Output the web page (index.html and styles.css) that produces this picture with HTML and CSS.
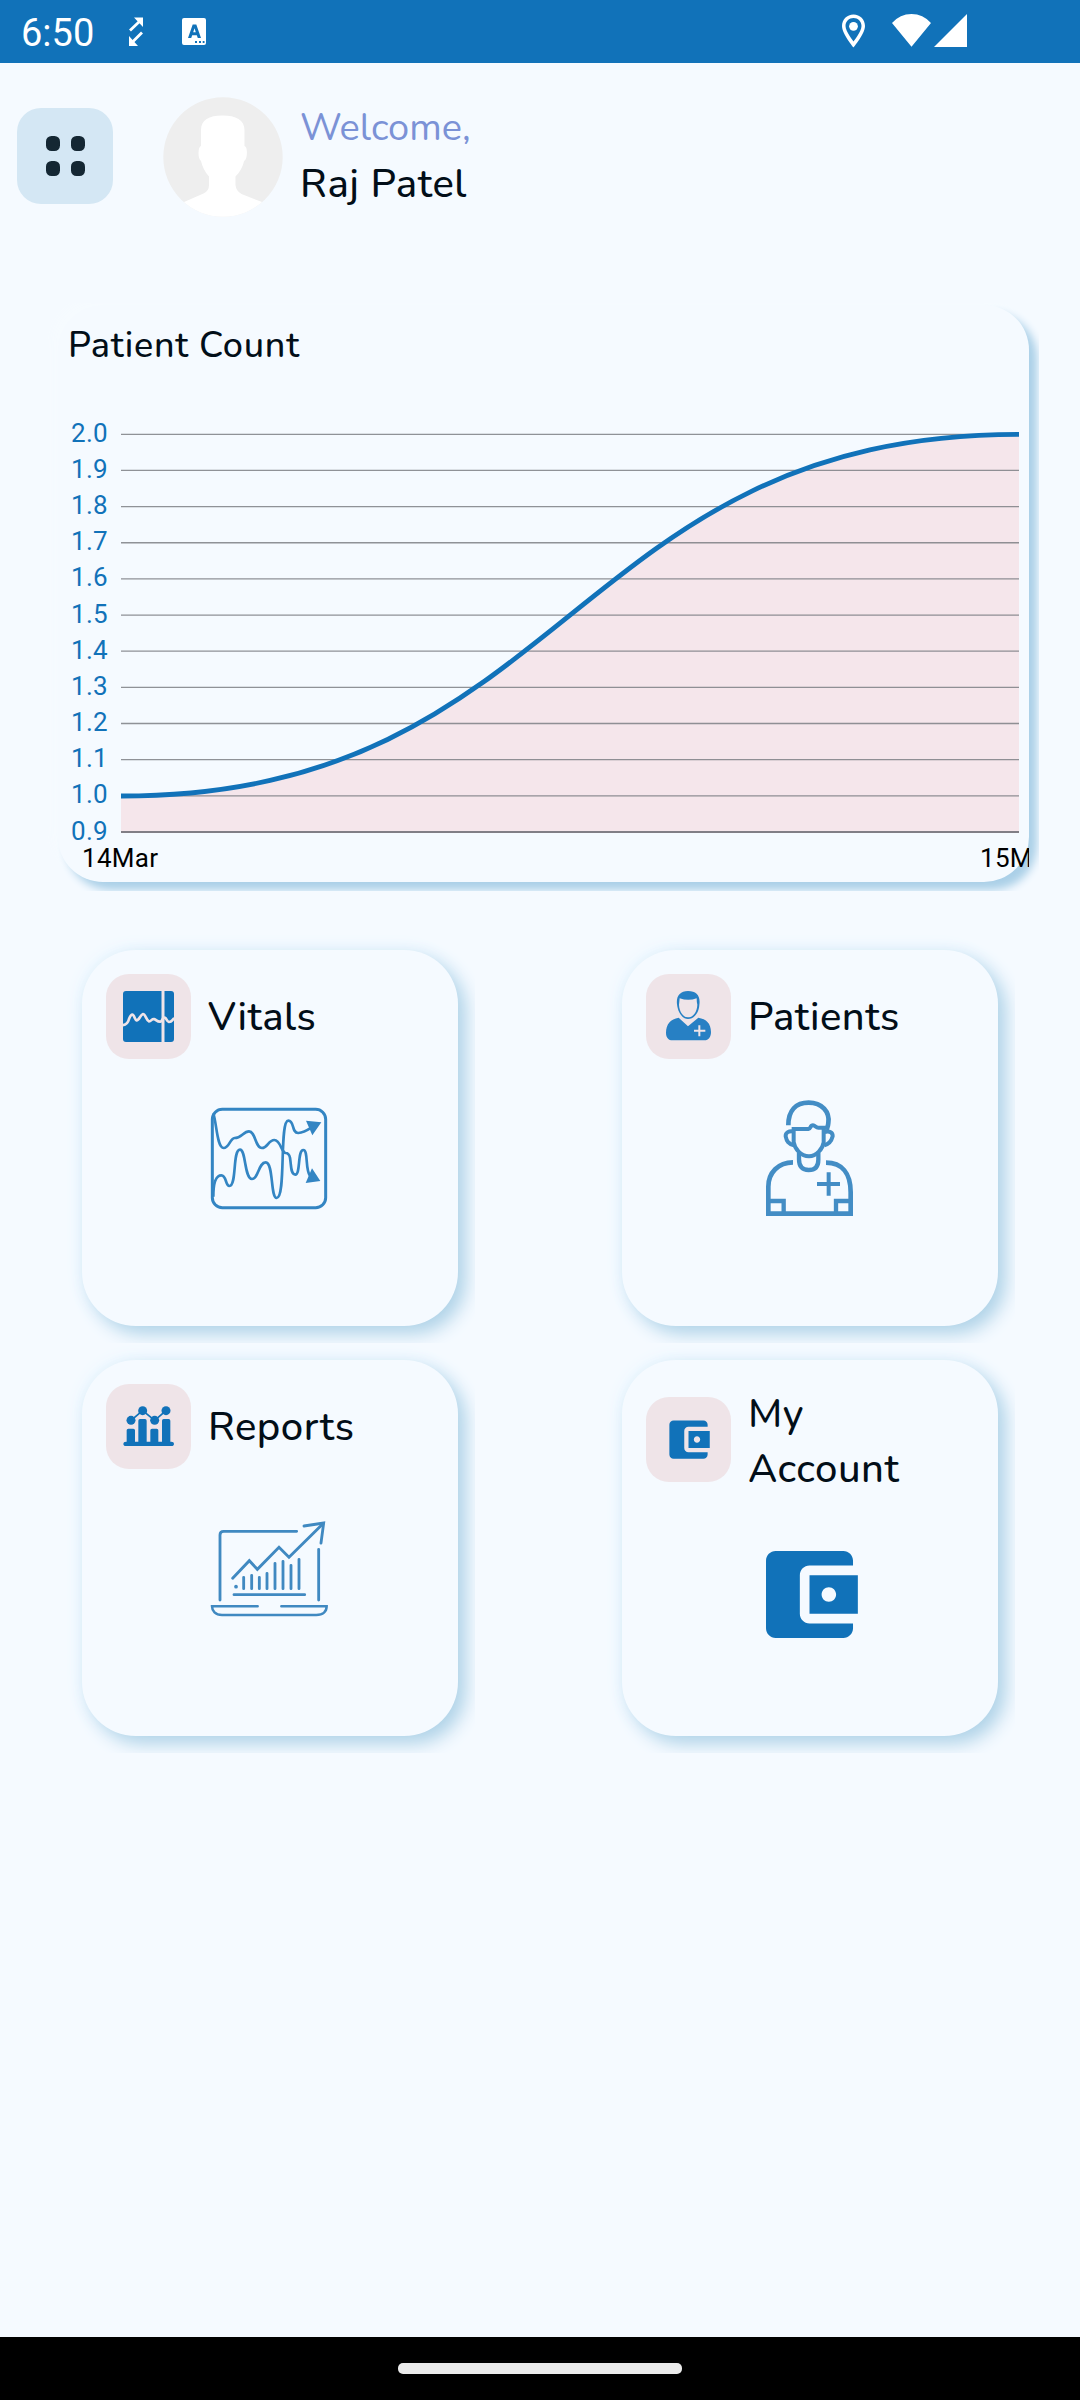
FILE: index.html
```html
<!DOCTYPE html>
<html lang="en">
<head>
<meta charset="utf-8">
<title>Dashboard</title>
<link rel="stylesheet" href="styles.css">
</head>
<body>
<div class="screen">
  <div class="status">
    <span class="clock">6:50</span>
    <svg class="status-left" width="90" height="63" viewBox="0 0 90 63" fill="#fff">
      <path d="M5 17.500H14V27z M0 36V46H9z"/>
      <path d="M1 30.500L11.500 20.500M2.500 43L13 32.500" fill="none" stroke="#fff" stroke-width="2.800"/>
      <path fill-rule="evenodd" d="M55 18h20q2 0 2 2v23q0 2-2 2H55q-2 0-2-2V20q0-2 2-2zM59 38h3.200l1-2.800h4.600l1 2.800H72L67.300 24.500h-3.600zM64.200 32.200h2.600l-1.300-4zM66 41v2h2v-2zM70 41v2h2v-2zM73.700 41v2h1.800v-2z"/>
    </svg>
    <svg class="status-right" width="127" height="63" viewBox="0 0 127 63" fill="#fff">
      <path fill-rule="evenodd" d="M13.500 14.500C7 14.500 2 19.500 2 26c0 8 11.500 21.500 11.500 21.500S25 34 25 26c0-6.500-5-11.500-11.500-11.500zm0 3.500c4.500 0 8 3.500 8 8 0 5.500-8 15.500-8 15.500S5.500 31.500 5.500 26c0-4.500 3.500-8 8-8z"/>
      <circle cx="13.500" cy="26.300" r="4.400"/>
      <path d="M52 23Q60 14 71.500 14t19.500 9L71.500 46.700zM127 14v33H94z"/>
    </svg>
  </div>

  <header class="header">
    <div class="menu"><i></i><i></i><i></i><i></i></div>
    <svg class="avatar" width="120" height="120" viewBox="0 0 120 120">
      <defs><clipPath id="round"><circle cx="60" cy="60" r="59.700"/></clipPath></defs>
      <g clip-path="url(#round)">
        <rect width="120" height="120" fill="#eeeeee"/>
        <path fill="#fff" d="M38 46V33C38 23 46 18.500 59.500 18.500S81.500 23 81.500 33V49q2.600 1 2.400 7.500-.2 6-2.800 7.500-2 9-8.600 15.500V88q.5 6 6 9L99 105l-4 20H24l-3-20 19.500-8.500Q46 94 46 88V79.500Q40 73 38 64q-2.500-2-2.500-8t2.500-7z"/>
      </g>
    </svg>
    <div class="greeting">
      <span class="hello">Welcome,</span>
      <span class="name">Raj Patel</span>
    </div>
  </header>

  <div class="chart-wrap">
    <section class="chart-card">
      <h2 class="chart-title">Patient Count</h2>
      <svg class="chart" width="969" height="482" viewBox="60 400 969 482">
        <path class="area" d="M121 796C570 796 570 434.300 1019 434.300V832H121z"/>
        <path class="grid" d="M121 434.300H1019M121 470.450H1019M121 506.600H1019M121 542.750H1019M121 578.900H1019M121 615.050H1019M121 651.200H1019M121 687.350H1019M121 723.500H1019M121 759.650H1019M121 795.800H1019"/>
        <path class="axis" d="M121 831.900H1019"/>
        <path class="line" d="M121 796C570 796 570 434.300 1019 434.300"/>
        <g class="y-labels">
          <text x="108" y="442">2.0</text><text x="108" y="478">1.9</text><text x="108" y="514">1.8</text><text x="108" y="550">1.7</text><text x="108" y="586">1.6</text><text x="108" y="623">1.5</text><text x="108" y="659">1.4</text><text x="108" y="695">1.3</text><text x="108" y="731">1.2</text><text x="108" y="767">1.1</text><text x="108" y="803">1.0</text><text x="108" y="840">0.9</text>
        </g>
        <g class="x-labels"><text x="82" y="867">14Mar</text><text x="980" y="867">15Mar</text></g>
      </svg>
    </section>
  </div>

  <main class="cards">
    <div class="cell"><section class="card">
      <div class="card-head">
        <div class="tile">
          <svg class="small" viewBox="159 183 153 153">
            <rect x="159" y="183" width="153" height="153" rx="9" fill="#1172b9"/>
            <path d="M279 183v153" stroke="#efe4e8" stroke-width="9" fill="none"/>
            <path d="M157 286Q173 284 177 267 182 254 187 254C193 254 194 270 200 271 208 271 211 254 219 252 227 252 229 272 237 274 244 274 245 266 252 267 260 270 262 276 271 275 277 274 275 265 283 263 289 261 289 274 297 276 307 276 307 267 313 266" stroke="#efe4e8" stroke-width="8" fill="none"/>
          </svg>
        </div>
        <h3 class="card-title">Vitals</h3>
      </div>
      <svg class="big" viewBox="427 513 348 348">
        <g fill="none" stroke="#3385c3" stroke-width="9">
          <rect x="428" y="538" width="340" height="295" rx="30"/>
          <path stroke-width="8" d="M431 550C441 580 442 654 462 654 479 654 480 626 495 624 516 624 521 604 538 604 558 604 556 654 577 654 594 654 596 630 614 630 633 630 635 668 648 669 657 669 659 674 661 683 665 708 663 734 677 734 693 734 683 660 701 660 716 660 706 718 721 738"/>
          <path stroke-width="8" d="M431 800C431 755 441 736 455 736 471 736 467 768 479 768 502 768 488 659 511 659 529 659 524 747 547 747 566 747 567 697 588 697 612 697 602 804 621 804 650 804 628 572 656 572 675 572 665 610 686 609 700 608 714 600 725 593"/>
        </g>
        <path fill="#3385c3" d="M709 572L755 577 728 616zM727 715L752 753 708 759z"/>
      </svg>
    </section></div>

    <div class="cell"><section class="card">
      <div class="card-head">
        <div class="tile">
          <svg class="small" viewBox="189 183 153 153">
            <path fill="#2780c4" d="M231 223C228 198 240 183 264 183 290 183 302 198 298 225 297 246 284 267 264 267 245 267 233 244 231 223zM237 224C238 246 250 262 264 262 280 262 291 246 292 224Q290 218 290 205 265 214 239 205 238 216 237 224z" fill-rule="evenodd"/>
            <path fill="#2780c4" d="M236 263L264 289 295 263C319 267 333 280 333 306 333 320 326 331 313 331H218C205 331 198 322 198 308 198 282 212 267 236 263z"/>
            <path d="M298 286v33M282 302h34" stroke="#efe4e8" stroke-width="6"/>
          </svg>
        </div>
        <h3 class="card-title">Patients</h3>
      </div>
      <svg class="big" viewBox="456 512 348 348">
        <g fill="none" stroke="#438dc5" stroke-width="14">
          <path d="M565 585C565 540 588 517 626 517 666 517 690 545 685 578Q685 584 680 598"/>
          <path stroke-width="12" d="M575 596H626C632 596 630 585 639 585 646 585 647 592 655 592H684M581 598V635C584 655 602 678 627 678 650 678 668 655 671 636V596"/>
          <path stroke-width="12" d="M583 604C566 600 556 607 557 618 560 633 565 640 582 645M674 605C689 600 699 607 698 618 694 634 688 641 673 645"/>
          <path stroke-width="13" d="M597 668V687C597 708 606 719 626 719 646 719 655 708 655 688V668"/>
          <path d="M579 696C535 696 505 727 505 769V850H752V786C752 728 725 697 678 697"/>
          <path stroke-width="13" d="M505 812H551V850M752 812H708V850"/>
          <path stroke-width="12" d="M686 726V796M651 761H720"/>
        </g>
      </svg>
    </section></div>

    <div class="cell"><section class="card">
      <div class="card-head">
        <div class="tile">
          <svg class="small" viewBox="159 183 153 153" fill="#1172b9">
            <circle cx="183" cy="241" r="13.500"/><circle cx="218" cy="212" r="13.500"/><circle cx="254" cy="241" r="13.500"/><circle cx="288" cy="212" r="13.500"/>
            <path d="M183 241L218 212 254 241 288 212" fill="none" stroke="#1172b9" stroke-width="5"/>
            <path d="M160 311q0-6 8-6h2V271q0-5 5-5h15q5 0 5 5v34h10V242q0-5 5-5h15q5 0 5 5v63h11V271q0-5 5-5h14q5 0 5 5v34h11V242q0-5 5-5h15q5 0 5 5v63h3q8 0 8 6 0 7-8 7H168q-8 0-8-7z"/>
          </svg>
        </div>
        <h3 class="card-title">Reports</h3>
      </div>
      <svg class="big" viewBox="427 513 348 348">
        <g fill="none" stroke="#4089c1" stroke-width="8.500" stroke-linecap="round">
          <path d="M451 780V585Q451 574 462 574H681M747 628V780"/>
          <path d="M489 715L539 662 563 688 628 622 658 652 760 551"/>
          <path d="M703 558L762 549 754 609"/>
          <path d="M522 712V746M546 706V746M569 712V746M592 700V746M616 670V746M640 664V746M664 676V746M688 658V746"/>
          <path d="M493 764H705"/><path d="M499 740h.1" stroke-width="11"/>
          <path stroke-width="7.500" d="M564 799H427C427 813 437 825 457 825H740C760 825 771 815 771 799H635"/>
        </g>
      </svg>
    </section></div>

    <div class="cell"><section class="card">
      <div class="card-head">
        <div class="tile">
          <svg class="small" viewBox="0 0 24 24" fill="#1172b9"><path d="M21 18v1c0 1.100-.9 2-2 2H5c-1.110 0-2-.9-2-2V5c0-1.100.89-2 2-2h14c1.100 0 2 .9 2 2v1h-9c-1.110 0-2 .9-2 2v8c0 1.100.89 2 2 2h9zm-9-2h10V8H12v8zm4-2.500c-.83 0-1.500-.67-1.500-1.500s.67-1.500 1.500-1.500 1.500.67 1.500 1.500-.67 1.500-1.500 1.500z"/></svg>
        </div>
        <h3 class="card-title two-line">My<br>Account</h3>
      </div>
      <svg class="big" viewBox="0.100 -0.100 24 24" fill="#1172b9"><path d="M21 18v1c0 1.100-.9 2-2 2H5c-1.110 0-2-.9-2-2V5c0-1.100.89-2 2-2h14c1.100 0 2 .9 2 2v1h-9c-1.110 0-2 .9-2 2v8c0 1.100.89 2 2 2h9zm-9-2h10V8H12v8zm4-2.500c-.83 0-1.500-.67-1.500-1.500s.67-1.500 1.500-1.500 1.500.67 1.500 1.500-.67 1.500-1.500 1.500z"/></svg>
    </section></div>
  </main>

  <footer class="nav"><div class="pill"></div></footer>
</div>
</body>
</html>
```
FILE: styles.css
```css
* { box-sizing: border-box; margin: 0; padding: 0; }
body { background: #f5faff; }
svg { display: block; flex: none; }
.big { overflow: visible; }
.screen {
  width: 1080px;
  height: 2400px;
  display: flex;
  flex-direction: column;
  background: #f5faff;
  color: #020e18;
  font-family: Nunito, Lato, sans-serif;
  overflow: hidden;
}

.status {
  height: 63px;
  display: flex;
  align-items: center;
  background: #1172b9;
  color: #fff;
}
.clock {
  width: 129px;
  padding: 4px 0 0 21px;
  font: 38px/63px Roboto, sans-serif;
}
.status-right { margin-left: auto; margin-right: 113px; }

.header {
  height: 240px;
  padding: 34px 0 0 17px;
  display: flex;
  align-items: flex-start;
}
.menu {
  width: 96px;
  height: 96px;
  margin-top: 10.500px;
  border-radius: 24px;
  background: #d4e7f4;
  display: grid;
  grid-template-columns: 14px 14px;
  grid-template-rows: 15px 15px;
  gap: 10px 11px;
  place-content: center;
}
.menu i { border-radius: 5.500px; background: #142733; }
.avatar { margin-left: 50px; }
.greeting {
  display: flex;
  flex-direction: column;
  margin-left: 17px;
  padding-top: 3px;
  line-height: 56px;
  white-space: nowrap;
}
.hello { font-size: 38px; font-weight: 450; }
.hello { color: #7b92d6; }
.name { font-size: 40px; font-weight: 530; letter-spacing: 0.600px; }

.chart-wrap {
  width: 999px;
  height: 588px;
  padding: 2px 10px 9px 18px;
  margin-left: 40px;
  overflow: hidden;
}
.chart-card {
  height: 577px;
  padding-left: 2px;
  border-radius: 45px;
  background: #f5faff;
  box-shadow: 8px 8px 8px #abd0e8, -6px -6px 10px #f6fbff;
}
.chart-title {
  height: 95px;
  padding: 13px 0 0 8px;
  font-size: 36px;
  font-weight: 530;
  letter-spacing: 0.750px;
  line-height: 55px;
}
.area { fill: #f5e6eb; }
.grid { fill: none; stroke: #7c7f85; stroke-width: 1.300; stroke-opacity: 0.850; }
.axis { fill: none; stroke: #817e86; stroke-width: 2; }
.line { fill: none; stroke: #1172b9; stroke-width: 4.800; }
.y-labels, .x-labels { font: 26px Roboto, sans-serif; letter-spacing: 0.300px; }
.y-labels { fill: #1172b9; text-anchor: end; }
.x-labels { fill: #000; }

.cards {
  display: grid;
  grid-template-columns: 413px 413px;
  grid-template-rows: 410px 410px;
  column-gap: 127px;
  margin: 42px 0 0 62px;
}
.cell { padding: 17px 17px 17px 20px; overflow: hidden; }
.card {
  width: 376px;
  height: 376px;
  padding: 24px;
  border-radius: 54px;
  background: #f5faff;
  box-shadow: 8px 8px 18px #b0d3e8, -2px -2px 16px #e9f6fe;
}
.card-head { display: flex; align-items: center; }
.tile {
  width: 85px;
  height: 85px;
  padding: 17px;
  border-radius: 23px;
  background: #efe4e8;
}
.small { width: 51px; height: 51px; }
.card-title {
  margin-left: 17px;
  padding-top: 1px;
  margin-bottom: -1px;
  font-size: 40px;
  font-weight: 530;
  letter-spacing: 0.500px;
  line-height: 55px;
}
.two-line { padding-top: 3px; margin-bottom: -3px; }
.big { width: 116px; height: 116px; margin: 42px auto 0; }

.nav {
  height: 63px;
  margin-top: auto;
  display: flex;
  justify-content: center;
  padding-top: 26px;
  background: #000;
}
.pill { width: 284px; height: 11px; border-radius: 5px; background: #ebebeb; }
```
